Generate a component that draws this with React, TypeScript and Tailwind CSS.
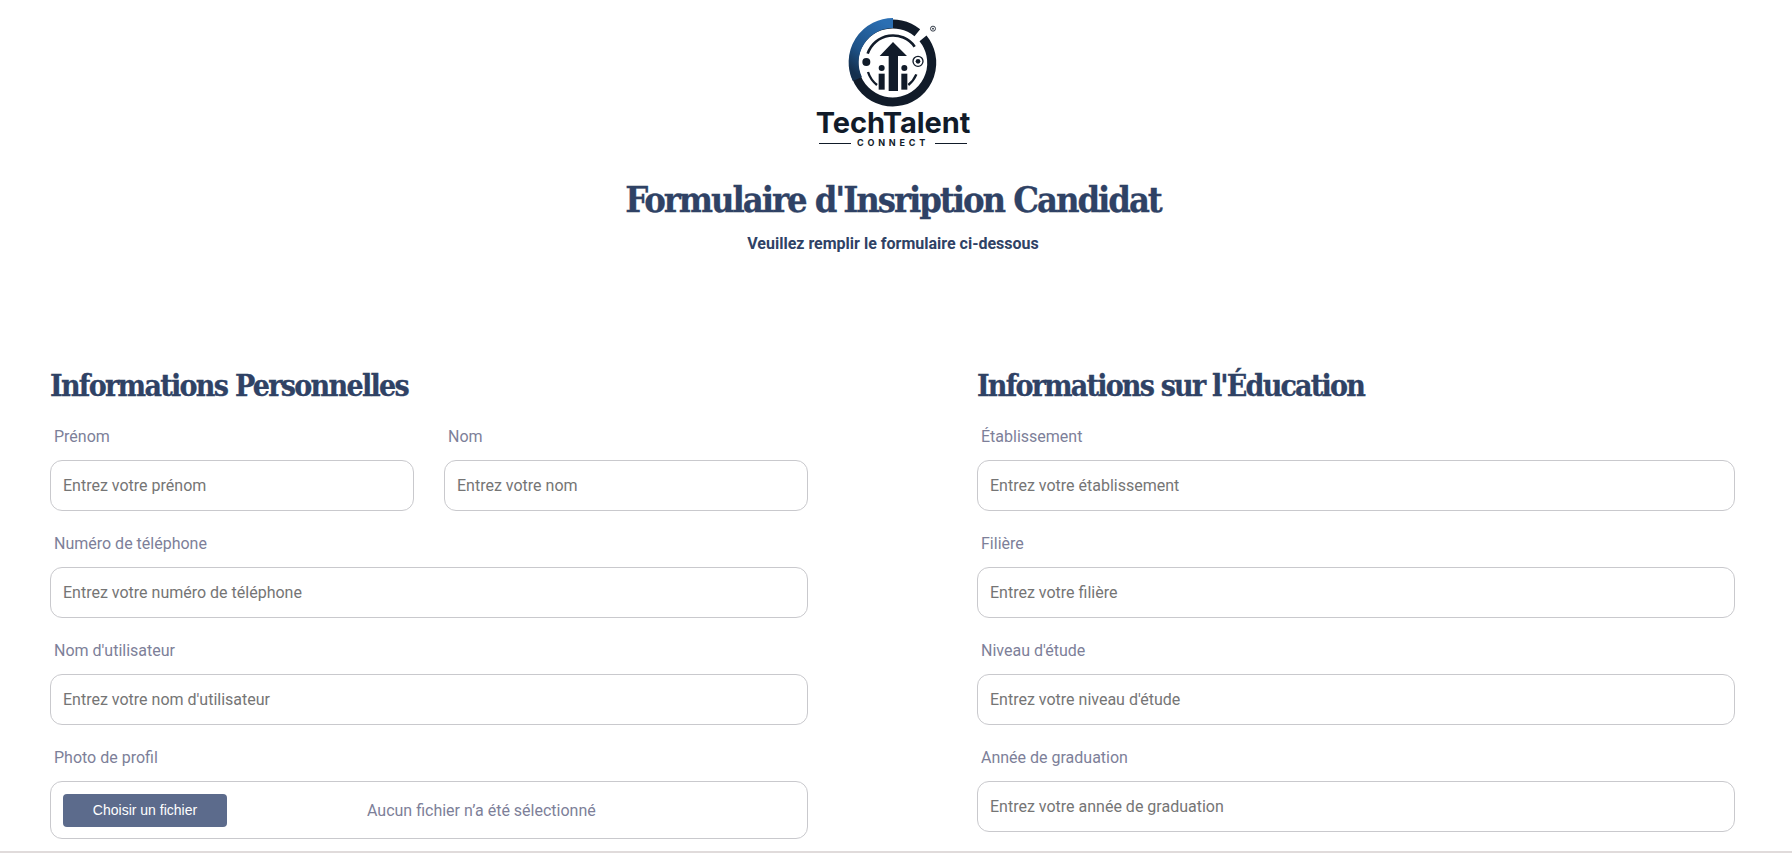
import React from "react";

const slab = "font-['DejaVu_Serif_Condensed','DejaVu_Serif',serif] [-webkit-text-stroke:0.3px_#2f4265]";

function Logo() {
  const ink = "#111b29";
  return (
    <div className="flex flex-col items-center h-[152px] pr-[6px]">
      <svg width="100" height="100" viewBox="160 35 300 300" className="mt-[12px]">
        <defs>
          <linearGradient id="ring" x1="0.8" y1="0" x2="0.2" y2="1">
            <stop offset="0" stopColor="#2b6fb3" />
            <stop offset="0.65" stopColor="#1e5287" />
            <stop offset="1" stopColor="#14304e" />
          </linearGradient>
        </defs>
        <path d="M400 113 A117 117 0 1 1 383 96" fill="none" stroke={ink} strokeWidth="27" transform="translate(0 1)" />
        <path d="M310 68 A118 118 0 0 0 203 236" fill="none" stroke="url(#ring)" strokeWidth="30" />
        <path d="M234 160 A80 80 0 0 1 375 139" fill="none" stroke={ink} strokeWidth="8" />
        <path d="M235 215 A82 82 0 0 0 262 254" fill="none" stroke={ink} strokeWidth="7" />
        <path d="M356 254 A82 82 0 0 0 380 222" fill="none" stroke={ink} strokeWidth="7" />
        <path d="M310 125 L352 167 L325 167 L325 272 L297 272 L297 167 L270 167 Z" fill={ink} />
        <circle cx="230" cy="185" r="12" fill={ink} />
        <circle cx="276" cy="203" r="9" fill={ink} />
        <rect x="267" y="220" width="18" height="48" fill={ink} />
        <circle cx="344" cy="203" r="9" fill={ink} />
        <rect x="335" y="220" width="18" height="48" fill={ink} />
        <circle cx="385" cy="183" r="15" fill="none" stroke={ink} strokeWidth="4" />
        <circle cx="385" cy="183" r="7" fill={ink} />
        <circle cx="430" cy="85" r="7.500" fill="none" stroke={ink} strokeWidth="2.500" />
        <circle cx="430" cy="85" r="2.500" fill={ink} />
      </svg>
      <div className="font-['Inter',sans-serif] font-bold text-[#111b29] text-[29px] leading-[30px] -mt-[4px] tracking-[-0.1px]">TechTalent</div>
      <div className="flex items-center gap-[6px] h-[10px]">
        <span className="w-[32px] h-px bg-[#111b29]" />
        <span className="font-['Inter',sans-serif] font-bold text-[#111b29] text-[9px] leading-[10px] tracking-[3.800px]">CONNECT</span>
        <span className="w-[32px] h-px bg-[#111b29]" />
      </div>
    </div>
  );
}

function Field({ label, placeholder, className = "" }: { label: string; placeholder: string; className?: string }) {
  return (
    <div className={`flex flex-col ${className}`}>
      <label className="pl-1 text-base leading-[24px] mb-[11px] text-[#7d7f99]">{label}</label>
      <input
        placeholder={placeholder}
        className="w-full h-[51px] rounded-[12px] border border-[#c9c9cd] bg-white px-3 text-base outline-none placeholder:text-[#757575]"
      />
    </div>
  );
}

export default function App() {
  return (
    <div className="h-screen overflow-hidden bg-white flex flex-col font-['Roboto',sans-serif]">
      <div className="flex-1 min-h-0 overflow-hidden">
        <Logo />
        <div className="pr-[6px] text-center">
          <h1 className={`${slab} mt-[24px] font-bold text-[36px] leading-[46px] tracking-[-2.05px] text-[#2f4265]`}>
            Formulaire d'Insription Candidat
          </h1>
          <p className="mt-[10px] font-bold text-base leading-[24px] text-[#2f4265]">
            Veuillez remplir le formulaire ci-dessous
          </p>
        </div>
        <div className="mt-[111px] grid grid-cols-[758px_758px] gap-x-[169px] px-[50px]">
          <section className="flex flex-col gap-[21px]">
            <h2 className={`${slab} font-bold text-[30px] leading-[38px] mb-[-1px] tracking-[-1.7px] text-[#2f4265]`}>Informations Personnelles</h2>
            <div className="grid grid-cols-[364px_364px] gap-x-[30px]">
              <Field label="Prénom" placeholder="Entrez votre prénom" />
              <Field label="Nom" placeholder="Entrez votre nom" />
            </div>
            <Field label="Numéro de téléphone" placeholder="Entrez votre numéro de téléphone" />
            <Field label="Nom d'utilisateur" placeholder="Entrez votre nom d'utilisateur" />
            <div className="flex flex-col">
              <label className="pl-1 text-base leading-[24px] mb-[11px] text-[#7d7f99]">Photo de profil</label>
              <div className="h-[58px] rounded-[12px] border border-[#c9c9cd] bg-white pl-3 flex items-center">
                <button className="w-[164px] h-[33px] rounded-[4px] bg-[#5c6b8c] text-white text-[14px] font-['Liberation_Sans',sans-serif]">
                  Choisir un fichier
                </button>
                <span className="ml-[140px] mt-[1px] text-base text-[#7d7f99]">Aucun fichier n’a été sélectionné</span>
              </div>
            </div>
          </section>
          <section className="flex flex-col gap-[21px]">
            <h2 className={`${slab} font-bold text-[30px] leading-[38px] mb-[-1px] tracking-[-1.8px] text-[#2f4265]`}>Informations sur l'Éducation</h2>
            <Field label="Établissement" placeholder="Entrez votre établissement" />
            <Field label="Filière" placeholder="Entrez votre filière" />
            <Field label="Niveau d'étude" placeholder="Entrez votre niveau d'étude" />
            <Field label="Année de graduation" placeholder="Entrez votre année de graduation" />
          </section>
        </div>
      </div>
      <div className="h-[2px] shrink-0 bg-[#e0dbdb]" />
    </div>
  );
}
